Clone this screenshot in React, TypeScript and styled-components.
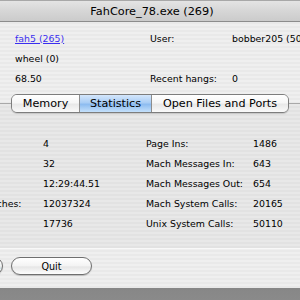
import styled, { createGlobalStyle } from 'styled-components';

const GlobalStyle = createGlobalStyle`
  html, body {
    margin: 0;
    padding: 0;
    overflow: hidden;
    background: #777;
  }
`;

const Screen = styled.div`
  width: 300px;
  height: 300px;
  overflow: hidden;
  font-family: "Lucida Grande", "DejaVu Sans", sans-serif;
  color: #000;
  background: linear-gradient(#2e2e2e, #555 30%, #8a8a8a);
`;

const Window = styled.div`
  width: 500px;
  height: 288px;
  margin-left: -100px;
  display: flex;
  flex-direction: column;
  background: repeating-linear-gradient(
    to bottom,
    #efefef 0px,
    #efefef 2px,
    #e9e9e9 2px,
    #e9e9e9 4px
  );
`;

const TitleBar = styled.div`
  height: 21px;
  border-top: 1px solid #a8a8a8;
  border-bottom: 1px solid #8c8c8c;
  box-sizing: border-box;
  height: 22px;
  display: flex;
  align-items: center;
  justify-content: center;
  padding-left: 4px;
  font-size: 11.3px;
  background: linear-gradient(#e4e4e4, #d6d6d6 50%, #cbcbcb);
`;

const InfoGrid = styled.div`
  display: grid;
  grid-template-columns: 87px 135px 82px 1fr;
  grid-auto-rows: 20px;
  align-items: center;
  padding: 6px 0 0 28px;
  font-size: 9.4px;
  white-space: nowrap;
`;

const Link = styled.span`
  color: #3b2ff0;
  text-decoration: underline;
`;

const TabView = styled.div`
  display: flex;
  flex-direction: column;
  margin-top: 6px;
`;

const TabStrip = styled.div`
  align-self: center;
  display: flex;
  position: relative;
  z-index: 1;
  height: 19px;
  box-sizing: border-box;
  border: 1px solid #7d7d7d;
  border-radius: 6px;
  overflow: hidden;
  box-shadow: 0 1px 1px rgba(0, 0, 0, 0.15);
`;

const Tab = styled.div<{ $w: number; $active?: boolean }>`
  width: ${(p) => p.$w}px;
  display: flex;
  align-items: center;
  justify-content: center;
  font-size: 11.2px;
  box-sizing: border-box;
  & + & {
    border-left: 1px solid #8d8d8d;
  }
  background: ${(p) =>
    p.$active
      ? 'linear-gradient(#d4e6fb, #a9cdf5 45%, #8dbcf0 55%, #c4e0fb)'
      : 'linear-gradient(#ffffff, #f6f6f6 45%, #e8e8e8 55%, #fafafa)'};
`;

const Panel = styled.div`
  margin: -10px 20px 0;
  border-top: 1px solid #a9a9a9;
  border-bottom: 1px solid #f8f8f8;
  padding: 29px 0 15px 17px;
  background: repeating-linear-gradient(
    to bottom,
    #e8e8e8 0px,
    #e8e8e8 2px,
    #e2e2e2 2px,
    #e2e2e2 4px
  );
  display: grid;
  grid-template-columns: 106px 103px 107px 1fr;
  grid-auto-rows: 20px;
  align-items: center;
  font-size: 9.4px;
  white-space: nowrap;
`;

const ButtonRow = styled.div`
  display: flex;
  gap: 8px;
  padding: 8px 0 0 22px;
`;

const Button = styled.div`
  width: 81px;
  height: 18px;
  box-sizing: border-box;
  border: 1px solid #6f6f6f;
  border-radius: 9px;
  display: flex;
  align-items: center;
  justify-content: center;
  font-size: 9.6px;
  background: linear-gradient(#ffffff, #f3f3f3 50%, #e6e6e6 55%, #fdfdfd);
  box-shadow: 0 1px 1px rgba(0, 0, 0, 0.2);
`;

const stats = [
  ['Threads:', '4', 'Page Ins:', '1486'],
  ['Ports:', '32', 'Mach Messages In:', '643'],
  ['CPU Time:', '12:29:44.51', 'Mach Messages Out:', '654'],
  ['Context Switches:', '12037324', 'Mach System Calls:', '20165'],
  ['Faults:', '17736', 'Unix System Calls:', '50110'],
];

const App = () => {
  return (
    <Screen>
      <GlobalStyle />
      <Window>
        <TitleBar>FahCore_78.exe (269)</TitleBar>
        <InfoGrid>
          <span>Parent Process:</span>
          <span>
            <Link>fah5 (265)</Link>
          </span>
          <span>User:</span>
          <span>bobber205 (501)</span>
          <span>Process Group:</span>
          <span>wheel (0)</span>
          <span />
          <span />
          <span>% CPU:</span>
          <span>68.50</span>
          <span>Recent hangs:</span>
          <span>0</span>
        </InfoGrid>
        <TabView>
          <TabStrip>
            <Tab $w={67}>Memory</Tab>
            <Tab $w={72} $active>
              Statistics
            </Tab>
            <Tab $w={137}>Open Files and Ports</Tab>
          </TabStrip>
          <Panel>
            {stats.map((row) =>
              row.map((cell, i) => <span key={row[0] + i}>{cell}</span>)
            )}
          </Panel>
        </TabView>
        <ButtonRow>
          <Button>Sample Process</Button>
          <Button>Quit</Button>
        </ButtonRow>
      </Window>
    </Screen>
  );
};

export default App;
